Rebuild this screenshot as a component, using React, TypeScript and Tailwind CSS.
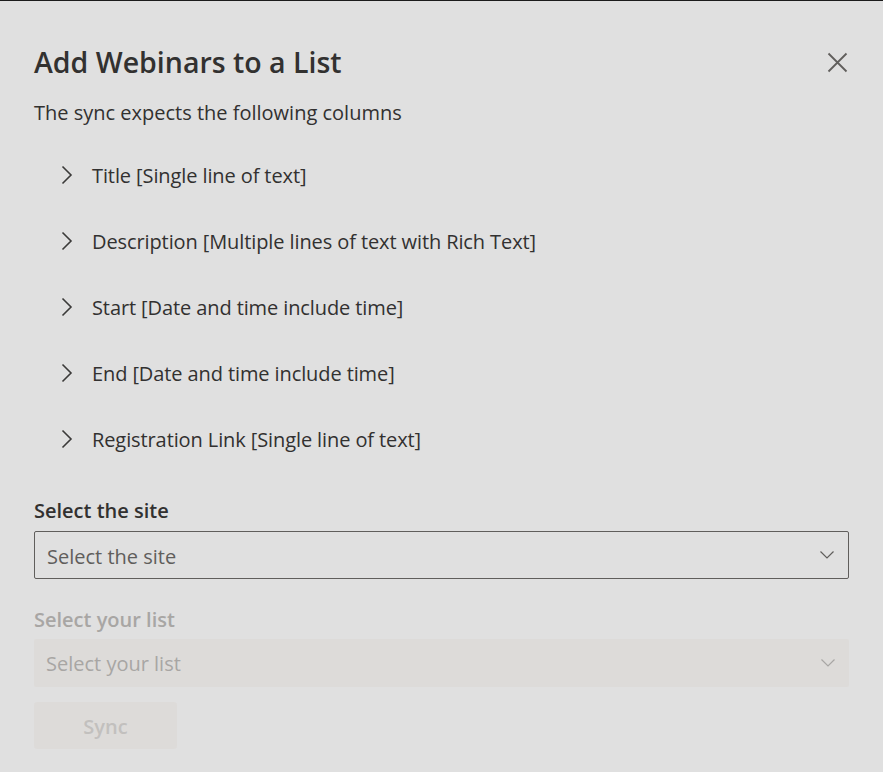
import { ReactNode } from "react";

const columns = [
    "Title [Single line of text]",
    "Description [Multiple lines of text with Rich Text]",
    "Start [Date and time include time]",
    "End [Date and time include time]",
    "Registration Link [Single line of text]",
];

const Chevron = ({ className }: { className?: string }) => (
    <svg width="14" height="8" viewBox="0 0 14 8" className={className}>
        <polyline points="0.5,0.5 7,7 13.5,0.5" fill="none" stroke="currentColor" strokeWidth="1.2" />
    </svg>
);

const Row = ({ children }: { children: ReactNode }) => (
    <div className="flex h-[66px] items-center">
        <svg width="12" height="20" viewBox="0 0 12 20" className="ml-[61px] text-[#3b3a39]">
            <polyline points="1.5,1.5 10,10 1.5,18.5" fill="none" stroke="currentColor" strokeWidth="1.6" />
        </svg>
        <span className="ml-[19px] pt-[2px] text-[20px] leading-[28px] tracking-[-0.1px] text-[#323130]">{children}</span>
    </div>
);

export default function App() {
    return (
        <div className="h-[772px] w-[883px] overflow-hidden border-t border-[#1b1b1b] bg-[#e0e0e0] font-['Open_Sans',sans-serif]">
            <div className="mt-[43px] flex h-[36px] items-center justify-between pl-[34px] pr-[35px]">
                <h1 className="text-[28.5px] font-semibold leading-[36px] text-[#323130]">Add Webinars to a List</h1>
                <svg width="21" height="21" viewBox="0 0 21 21" className="text-[#605e5c]">
                    <path d="M1.5 1.5 L19.5 19.5 M19.5 1.5 L1.5 19.5" stroke="currentColor" strokeWidth="1.8" />
                </svg>
            </div>

            <p className="mt-[18px] pl-[34px] pt-[1px] text-[20px] leading-[28px] text-[#323130]">The sync expects the following columns</p>

            <div className="mt-[15px]">
                {columns.map((c) => <Row key={c}>{c}</Row>)}
            </div>

            <div className="px-[34px]">
                <label className="mt-[24px] block pt-[1px] text-[20px] font-semibold leading-[28px] text-[#323130]">Select the site</label>
                <div className="mt-[6px] flex h-[48px] items-center justify-between rounded-[2px] border border-[#605e5c] pl-[12px] pr-[14px]">
                    <span className="pt-[3px] text-[20px] leading-[28px] text-[#605e5c]">Select the site</span>
                    <Chevron className="text-[#605e5c]" />
                </div>

                <label className="mt-[26px] block pt-[1px] text-[20px] font-semibold leading-[28px] text-[#a8a6a4]">Select your list</label>
                <div className="mt-[5px] flex h-[48px] items-center justify-between rounded-[2px] bg-[#dddbd9] pl-[12px] pr-[14px]">
                    <span className="pt-[2px] text-[20px] leading-[28px] text-[#a8a6a4]">Select your list</span>
                    <Chevron className="text-[#a8a6a4]" />
                </div>

                <button className="mt-[15px] flex h-[47px] w-[143px] items-center justify-center rounded-[3px] bg-[#dddbd9] pt-[3px] text-[20px] font-semibold text-[#c2c0be]">Sync</button>
            </div>
        </div>
    );
}
